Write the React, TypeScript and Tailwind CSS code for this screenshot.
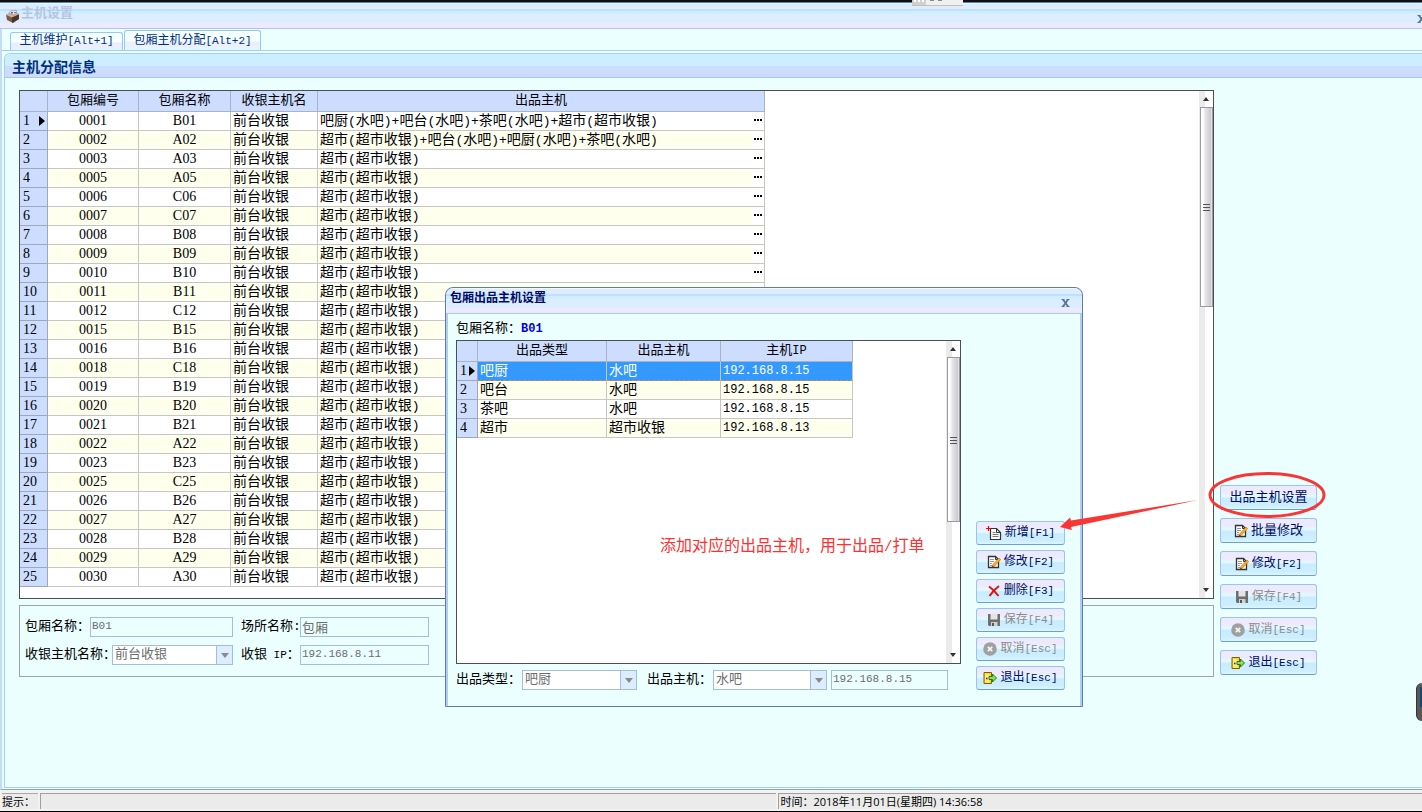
import type { ReactNode } from "react";
import { clsx } from "clsx";

const cjk = "font-['Liberation_Mono','Noto_Sans_CJK_SC',monospace]";
const serif = "font-['Liberation_Serif','Noto_Sans_CJK_SC',serif]";
const titleBar =
  "bg-[linear-gradient(#f4f8ff_0_1px,#dcedff_1px_6px,#c8dcff_6px_8px,#ccf0ff_8px_11px,#dcedff_11px_20px,#eeeafd_20px)]";

const bar = "超市(超市收银)";

const rooms: [string, string, string][] = [
  ["0001", "B01", "吧厨(水吧)+吧台(水吧)+茶吧(水吧)+超市(超市收银)"],
  ["0002", "A02", "超市(超市收银)+吧台(水吧)+吧厨(水吧)+茶吧(水吧)"],
  ["0003", "A03", bar],
  ["0005", "A05", bar],
  ["0006", "C06", bar],
  ["0007", "C07", bar],
  ["0008", "B08", bar],
  ["0009", "B09", bar],
  ["0010", "B10", bar],
  ["0011", "B11", bar],
  ["0012", "C12", bar],
  ["0015", "B15", bar],
  ["0016", "B16", bar],
  ["0018", "C18", bar],
  ["0019", "B19", bar],
  ["0020", "B20", bar],
  ["0021", "B21", bar],
  ["0022", "A22", bar],
  ["0023", "B23", bar],
  ["0025", "C25", bar],
  ["0026", "B26", bar],
  ["0027", "A27", bar],
  ["0028", "B28", bar],
  ["0029", "A29", bar],
  ["0030", "A30", bar],
];

const hosts: [string, string, string][] = [
  ["吧厨", "水吧", "192.168.8.15"],
  ["吧台", "水吧", "192.168.8.15"],
  ["茶吧", "水吧", "192.168.8.15"],
  ["超市", "超市收银", "192.168.8.13"],
];

// Latin runs are set smaller than the Chinese so that they take half a column each
function Mixed({ text, latin = "text-[12px]" }: { text: string; latin?: string }) {
  return (
    <>
      {text.split(/([\x20-\x7e]+)/).map((part, i) =>
        i % 2 ? (
          <span key={i} className={latin}>
            {part}
          </span>
        ) : (
          part
        )
      )}
    </>
  );
}

function EditIcon() {
  return (
    <svg viewBox="0 0 14 14" className="h-3.5 w-3.5 shrink-0">
      <path d="M1.5 1.5h7l3 3v8h-10z" fill="#fff" stroke="#333" strokeWidth="1.3" />
      <path d="M8.5 1.5v3h3" fill="none" stroke="#333" />
      <path d="M3 4.5h4M3 6.5h4M3 8.5h2M3 10.5h2" stroke="#999" />
      <path d="M12 3l1.700 1.600-6 6.300-2.500 1 .8-2.500z" fill="#ffb020" stroke="#c4600b" strokeWidth=".6" />
      <path d="M5.200 12.100l.5-1.600 1.100 1z" fill="#222" />
    </svg>
  );
}

function NewIcon() {
  return (
    <svg viewBox="0 0 16 14" className="h-3.5 w-4 shrink-0">
      <path d="M4.5 2.5h6l4 4v7h-10z" fill="#fff" stroke="#333" strokeWidth="1.2" />
      <path d="M10.5 2.5v4h4" fill="none" stroke="#333" />
      <path d="M6.5 6.5h3M6.5 8.5h6M6.5 10.5h6" stroke="#777" />
      <path d="M0 2.5h5M2.5 0v5" stroke="#f00" strokeWidth="1.2" />
    </svg>
  );
}

function DeleteIcon() {
  return (
    <svg viewBox="0 0 14 14" className="h-3.5 w-3.5 shrink-0">
      <path d="M2 2.5c3 2 7 6 9.500 9.500M12 2C8 5 5 8 2.500 12" fill="none" stroke="#e01010" strokeWidth="2" />
    </svg>
  );
}

function SaveIcon() {
  return (
    <svg viewBox="0 0 14 14" className="h-3.5 w-3.5 shrink-0">
      <path d="M1 1h12v12H2l-1-1z" fill="#6e6e6e" />
      <path d="M3.500 1h7v5.500h-7z" fill="#e4e4e4" />
      <path d="M4 9h6.500v4H4z" fill="#d0d0d0" />
      <path d="M5 10h2v3H5z" fill="#555" />
    </svg>
  );
}

function CancelIcon() {
  return (
    <svg viewBox="0 0 14 14" className="h-3.5 w-3.5 shrink-0">
      <circle cx="7" cy="7" r="6.800" fill="#a0a0a0" />
      <path d="M4.800 4.800l4.400 4.400M9.200 4.800L4.800 9.200" stroke="#f4f4f4" strokeWidth="1.800" />
    </svg>
  );
}

function ExitIcon() {
  return (
    <svg viewBox="0 0 14 14" className="h-3.5 w-3.5 shrink-0">
      <path d="M1 1.500h7.500v11H1z" fill="#f5d33a" stroke="#7a6400" />
      <path d="M2 2.500l4.500 1v8.500l-4.500-.5z" fill="#ffe978" />
      <path d="M3 7.500h1.500" stroke="#333" strokeWidth="1.500" />
      <path d="M6 5.500h3.500V3l4 4-4 4V8.500H6z" fill="#8ee058" stroke="#246b10" strokeWidth=".9" />
    </svg>
  );
}

function ActionButton({
  icon,
  label,
  disabled,
  className,
}: {
  icon?: ReactNode;
  label: string;
  disabled?: boolean;
  className?: string;
}) {
  return (
    <button
      type="button"
      disabled={disabled}
      className={clsx(
        "flex items-center justify-center gap-[3px] rounded-[3px] border border-[#9cc4e8] border-b-[#6ca0d8] whitespace-nowrap",
        "bg-[linear-gradient(#edeafd_0_30%,#e4f8ff_40%,#e0f6ff_48%,#c8ecff_54%,#cdeeff_85%,#dcf6ff_100%)]",
        disabled ? "text-[#8c8c8c]" : "text-[#000a64]",
        className
      )}
    >
      {icon}
      <span>
        <Mixed text={label} latin="text-[11px]" />
      </span>
    </button>
  );
}

function Scrollbar({ thumb }: { thumb: string }) {
  return (
    <div className="flex w-3.5 shrink-0 flex-col items-center bg-[linear-gradient(90deg,#ebebeb_0_6px,#fff_6px)]">
      <svg viewBox="0 0 8 16" className="h-4 w-2 shrink-0">
        <path d="M1 10l3-4 3 4z" fill="#333" />
      </svg>
      <div
        className={clsx(
          "flex w-[13px] items-center justify-center border border-[#9a9aa0] bg-[linear-gradient(90deg,#fff_0_2px,#e8e8ea_4px,#c8c8d0_10px,#fff)]",
          thumb
        )}
      >
        <svg viewBox="0 0 7 8" className="h-2 w-[7px]">
          <path d="M0 1.500h7M0 4.500h7M0 7.500h7" stroke="#555" strokeWidth="1.200" />
        </svg>
      </div>
      <svg viewBox="0 0 8 16" className="mt-auto h-4 w-2 shrink-0">
        <path d="M1 6l3 4 3-4z" fill="#333" />
      </svg>
    </div>
  );
}

function HeadCell({ children }: { children?: ReactNode }) {
  return (
    <th className="h-[21px] border-r border-b border-[#a9b3c6] bg-[#ccddff] p-0 text-[13px] font-normal">{children}</th>
  );
}

function IndexCell({ n, current }: { n: number; current?: boolean }) {
  return (
    <td className={clsx("h-[19px] border-r border-b border-[#a0a8b8] bg-[#ccddff] p-0 pl-[3px] text-black", serif)}>
      <div className="flex items-center justify-between pr-0.5">
        {n}
        {current && (
          <svg viewBox="0 0 6 10" className="h-2.5 w-1.5">
            <path d="M0 0l6 5-6 5z" fill="#000" />
          </svg>
        )}
      </div>
    </td>
  );
}

const cell = "h-[19px] border-r border-b border-[#c6c6c6] p-0";

function Field({ id, value, className }: { id: string; value: string; className: string }) {
  return (
    <input
      id={id}
      disabled
      defaultValue={value}
      className={clsx("h-5 border border-[#a4bce0] bg-transparent px-px pb-0.5 text-[#6d6d6d]", className)}
    />
  );
}

function Dropdown({ id, value, className }: { id: string; value: string; className: string }) {
  return (
    <div className={clsx("relative", className)}>
      <select
        id={id}
        disabled
        className="block h-5 w-full appearance-none border border-[#a4bce0] bg-white pl-0.5 text-[13px] text-[#6d6d6d] opacity-100"
      >
        <option>{value}</option>
      </select>
      <span className="pointer-events-none absolute inset-y-px right-px flex w-4 items-center justify-center border-l border-[#a4bce0] bg-[#dcedff]">
        <svg viewBox="0 0 8 5" className="h-[5px] w-2">
          <path d="M0 0h8L4 5z" fill="#8a8a8a" />
        </svg>
      </span>
    </div>
  );
}

function CloseIcon() {
  return (
    <svg viewBox="0 0 9 8" className="h-2 w-[9px]">
      <path d="M0.500 0.500h3M5.500 .5h3M.5 7.500h3M5.500 7.500h3" stroke="#56749c" />
      <path d="M2 .5l5 7M7 .5l-5 7" stroke="#56749c" strokeWidth="1.800" />
    </svg>
  );
}

function RoomGrid() {
  return (
    <div className="flex justify-between border border-[#4e4e4e] bg-white pb-[11px]">
      <table className="w-[745px] table-fixed border-separate border-spacing-0 text-[14px] leading-[18px]">
        <colgroup>
          <col className="w-[28px]" />
          <col className="w-[91px]" />
          <col className="w-[92px]" />
          <col className="w-[87px]" />
          <col />
        </colgroup>
        <thead>
          <tr>
            <HeadCell />
            <HeadCell>包厢编号</HeadCell>
            <HeadCell>包厢名称</HeadCell>
            <HeadCell>收银主机名</HeadCell>
            <HeadCell>出品主机</HeadCell>
          </tr>
        </thead>
        <tbody>
          {rooms.map(([code, name, output], i) => (
            <tr key={code} className="odd:bg-white even:bg-[#ffffee]">
              <IndexCell n={i + 1} current={i === 0} />
              <td className={clsx(cell, serif, "text-center")}>{code}</td>
              <td className={clsx(cell, serif, "text-center")}>{name}</td>
              <td className={clsx(cell, "pl-0.5")}>前台收银</td>
              <td className={clsx(cell, "pl-0.5")}>
                <div className="flex h-[18px] items-center justify-between">
                  <span>
                    <Mixed text={output} latin="text-[13px]" />
                  </span>
                  <button type="button" aria-label="出品主机" className="flex h-4 w-3 items-center justify-center bg-white">
                    <svg viewBox="0 0 8 6" className="h-1.5 w-2">
                      <path d="M0 1h2v2H0zM3 1h2v2H3zM6 1h2v2H6z" fill="#000" />
                    </svg>
                  </button>
                </div>
              </td>
            </tr>
          ))}
        </tbody>
      </table>
      <div className="-mb-[11px] flex">
        <Scrollbar thumb="h-[200px]" />
      </div>
    </div>
  );
}

function HostDialog() {
  return (
    <section
      role="dialog"
      aria-labelledby="dialog-title"
      className="absolute top-[287px] left-[445px] w-[638px] rounded-t-lg border border-[#5b7cb4] bg-[#ebffff] shadow-[inset_2px_0_#b4ccf4,inset_-2px_0_#b4ccf4]"
    >
      <div className={clsx("flex h-[26px] items-center justify-between rounded-t-lg border-b border-[#aac8fa] pr-3 pl-1", titleBar)}>
        <h2 id="dialog-title" className="pb-1 text-[12px] font-bold text-[#000a64]">
          包厢出品主机设置
        </h2>
        <button type="button" aria-label="关闭" className="mt-1">
          <CloseIcon />
        </button>
      </div>
      <div className="flex items-end justify-between pt-1 pr-[17px] pb-4 pl-2.5">
        <div>
          <p className="flex h-[22px] items-center text-[13px]">
            包厢名称：<b className="text-[12px] text-[#0000e0]">B01</b>
          </p>
          <div className="relative flex h-[324px] w-[505px] items-stretch justify-between border border-[#4e4e4e] bg-white">
            <table className="h-fit w-[396px] table-fixed border-separate border-spacing-0 text-[14px] leading-[18px]">
              <colgroup>
                <col className="w-[21px]" />
                <col className="w-[129px]" />
                <col className="w-[114px]" />
                <col />
              </colgroup>
              <thead>
                <tr>
                  <HeadCell />
                  <HeadCell>出品类型</HeadCell>
                  <HeadCell>出品主机</HeadCell>
                  <HeadCell>
                    <Mixed text="主机IP" />
                  </HeadCell>
                </tr>
              </thead>
              <tbody>
                {hosts.map((row, i) => (
                  <tr key={i} className={i === 0 ? "bg-[#3399ff] text-white" : i % 2 ? "bg-[#ffffee]" : "bg-white"}>
                    <IndexCell n={i + 1} current={i === 0} />
                    {row.map((text, j) => (
                      <td
                        key={j}
                        className={clsx(
                          "h-[19px] border-r border-b p-0 pl-0.5",
                          i === 0 ? "border-r-[#c6c6c6] border-b-[#e08a3c] [border-bottom-style:dashed]" : "border-[#c6c6c6]"
                        )}
                      >
                        <div className="flex h-[18px] items-center">
                          <Mixed text={text} />
                        </div>
                      </td>
                    ))}
                  </tr>
                ))}
              </tbody>
            </table>
            <Scrollbar thumb="h-[165px]" />
            <p className="absolute top-[194px] left-[203px] text-[16px] leading-6 whitespace-nowrap text-[#ff3030]">
              <Mixed text="添加对应的出品主机，用于出品/打单" latin="text-[14px]" />
            </p>
          </div>
          <div className="mt-1.5 flex items-center text-[13px]">
            <label htmlFor="out-type" className="w-[66px] whitespace-nowrap">
              出品类型：
            </label>
            <Dropdown id="out-type" value="吧厨" className="mr-2.5 w-[115px]" />
            <label htmlFor="out-host" className="w-[66px] whitespace-nowrap">
              出品主机：
            </label>
            <Dropdown id="out-host" value="水吧" className="mr-1 w-[114px]" />
            <Field id="out-ip" value="192.168.8.15" className="w-[117px] text-[11px]" />
          </div>
        </div>
        <div className="flex w-[89px] flex-col gap-[5px] text-[12px]">
          <ActionButton className="h-6" icon={<NewIcon />} label="新增[F1]" />
          <ActionButton className="h-6" icon={<EditIcon />} label="修改[F2]" />
          <ActionButton className="h-6" icon={<DeleteIcon />} label="删除[F3]" />
          <ActionButton className="h-6" icon={<SaveIcon />} label="保存[F4]" disabled />
          <ActionButton className="h-6" icon={<CancelIcon />} label="取消[Esc]" disabled />
          <ActionButton className="h-6" icon={<ExitIcon />} label="退出[Esc]" />
        </div>
      </div>
    </section>
  );
}

export default function App() {
  return (
    <div className={clsx("relative flex min-h-screen flex-col overflow-hidden border-b border-black bg-[#ebffff] text-[13px] leading-4 text-black", cjk)}>
      <div className="h-[3px] border-b border-[#4a86c4] bg-[#101010]" />
      <div className="absolute top-0 left-[912px] flex h-1.5 w-[51px] border-b border-[#c0c0c0] bg-[#f0f0f0]">
        <div className="flex w-3.5 justify-center gap-0.5 bg-[#d0d0d0]">
          <i className="h-0.5 w-0.5 bg-white" />
          <i className="h-0.5 w-0.5 bg-white" />
          <i className="h-0.5 w-0.5 bg-white" />
        </div>
        <div className="flex gap-1 pl-1">
          <i className="h-px w-1 bg-[#888]" />
          <i className="h-px w-1 bg-[#888]" />
        </div>
      </div>

      <header className={clsx("flex h-[26px] items-center border-b border-[#aac4ff] pl-[5px]", titleBar)}>
        <svg viewBox="0 0 15 14" className="h-3.5 w-[15px]">
          <path d="M1 6l6-3 7 2v5l-6 4-6-3z" fill="#7a5a40" />
          <path d="M1 6l6 2.500 7-3-6-3z" fill="#c8b49c" />
          <path d="M7 8.500V14l7-4V5.500z" fill="#4c3626" />
          <path d="M4 4l2-2.500 3 .5 2-1 1 3-4 2z" fill="#e8ecf0" stroke="#7c8890" strokeWidth=".6" />
          <path d="M6 3h2v1.500H6z" fill="#c84040" />
          <path d="M9 3h2v1H9z" fill="#48a870" />
        </svg>
        <h1 className="pb-1 pl-px text-[13px] font-bold text-[#b4c6de]">主机设置</h1>
        <button type="button" aria-label="关闭" className="-mr-1 mt-1.5 ml-auto">
          <CloseIcon />
        </button>
      </header>

      <main className="flex flex-1 flex-col border-b border-l-2 border-b-[#8ca4cc] border-l-[#c4dcf4] pb-px">
        <div role="tablist" className="flex h-[22px] items-end gap-px border-b border-[#a4d0f4] pl-2 text-[12px] text-[#00307c]">
          <button
            type="button"
            role="tab"
            className="h-[18px] w-[113px] rounded-t-[3px] border border-b-0 border-[#9cc8f0] bg-[linear-gradient(#f4ffff_50%,#f0ecfc_60%,#e0f4ff)] pb-0.5 whitespace-nowrap"
          >
            <Mixed text="主机维护[Alt+1]" latin="text-[11px]" />
          </button>
          <button
            type="button"
            role="tab"
            aria-selected="true"
            className="h-5 w-[137px] rounded-t-[3px] border border-b-0 border-[#9cc8f0] bg-[linear-gradient(#f4ffff_50%,#f0ecfc_60%,#e0f8ff)] whitespace-nowrap"
          >
            <Mixed text="包厢主机分配[Alt+2]" latin="text-[11px]" />
          </button>
        </div>

        <section className="mt-0.5 ml-0.5 flex flex-1 flex-col rounded-tl-md border border-r-0 border-[#a4d0f4]">
          <h2 className="flex h-6 items-center rounded-tl-md border-b border-[#a8c4ff] bg-[linear-gradient(#cceeff_0_50%,#ccddff_50%)] pt-1 pl-[7px] text-[14px] font-bold text-[#00307c]">
            主机分配信息
          </h2>
          <div className="flex items-end gap-1.5 pt-3 pr-[105px] pl-3.5">
            <div className="min-w-0 flex-1">
              <RoomGrid />
              <div className="mt-1.5 flex flex-col gap-2 border border-[#a4a4a4] px-[5px] py-[11px]">
                <div className="flex items-center">
                  <label htmlFor="room-name" className="w-[65px] whitespace-nowrap">
                    包厢名称：
                  </label>
                  <Field id="room-name" value="B01" className="mr-2 w-[143px] text-[11px]" />
                  <label htmlFor="place-name" className="w-[59px] whitespace-nowrap">
                    场所名称:
                  </label>
                  <Field id="place-name" value="包厢" className="w-[129px] text-[13px]" />
                </div>
                <div className="flex items-center">
                  <label htmlFor="cash-host" className="w-[87px] whitespace-nowrap">
                    收银主机名称：
                  </label>
                  <Dropdown id="cash-host" value="前台收银" className="mr-2 w-[121px]" />
                  <label htmlFor="cash-ip" className="w-[59px] whitespace-nowrap">
                    <Mixed text="收银 IP：" latin="text-[11px]" />
                  </label>
                  <Field id="cash-ip" value="192.168.8.11" className="w-[129px] text-[11px]" />
                </div>
              </div>
            </div>
            <div className="flex w-[97px] flex-col gap-2 pb-0.5 text-[12px]">
              <ActionButton className="h-[25px] text-[13px]" label="出品主机设置" />
              <ActionButton className="h-[25px] text-[13px]" icon={<EditIcon />} label="批量修改" />
              <ActionButton className="h-[25px]" icon={<EditIcon />} label="修改[F2]" />
              <ActionButton className="h-[25px]" icon={<SaveIcon />} label="保存[F4]" disabled />
              <ActionButton className="h-[25px]" icon={<CancelIcon />} label="取消[Esc]" disabled />
              <ActionButton className="h-[25px]" icon={<ExitIcon />} label="退出[Esc]" />
            </div>
          </div>
        </section>
      </main>

      <footer className="flex h-[21px] gap-0.5 bg-[#f4f2ee] pt-[3px] pb-0.5 pl-0.5 font-['Open_Sans','Noto_Sans_CJK_SC',sans-serif] text-[11px]">
        <div className="w-9 border-t border-[#a8a8a8] bg-[#ebebeb] whitespace-nowrap">提示：</div>
        <div className="flex-[737] border-t border-l border-[#a0a0a0] bg-[#ebebeb]" />
        <div className="flex-[643] border-t border-l border-[#a0a0a0] bg-[#ebebeb] pl-px">
          时间：2018年11月01日(星期四) 14:36:58
        </div>
      </footer>

      <HostDialog />

      {/* hand-drawn callout from the host button to the add button */}
      <svg viewBox="0 0 270 60" className="pointer-events-none absolute top-[470px] left-[1058px] h-[60px] w-[270px]">
        <ellipse cx="209" cy="25" rx="57" ry="21.500" fill="none" stroke="#fb3434" strokeWidth="3" />
        <path d="M140 30L13 50.500l-1-3L2 57l12 3-1-3z" fill="#fb3434" />
      </svg>

      <div className="absolute top-[683px] right-0 h-[38px] w-1.5 rounded-l-md border-l border-[#333] bg-[#585858] pt-1 pl-[3px]">
        <div className="h-5 bg-[#0c4c84]" />
      </div>
    </div>
  );
}
